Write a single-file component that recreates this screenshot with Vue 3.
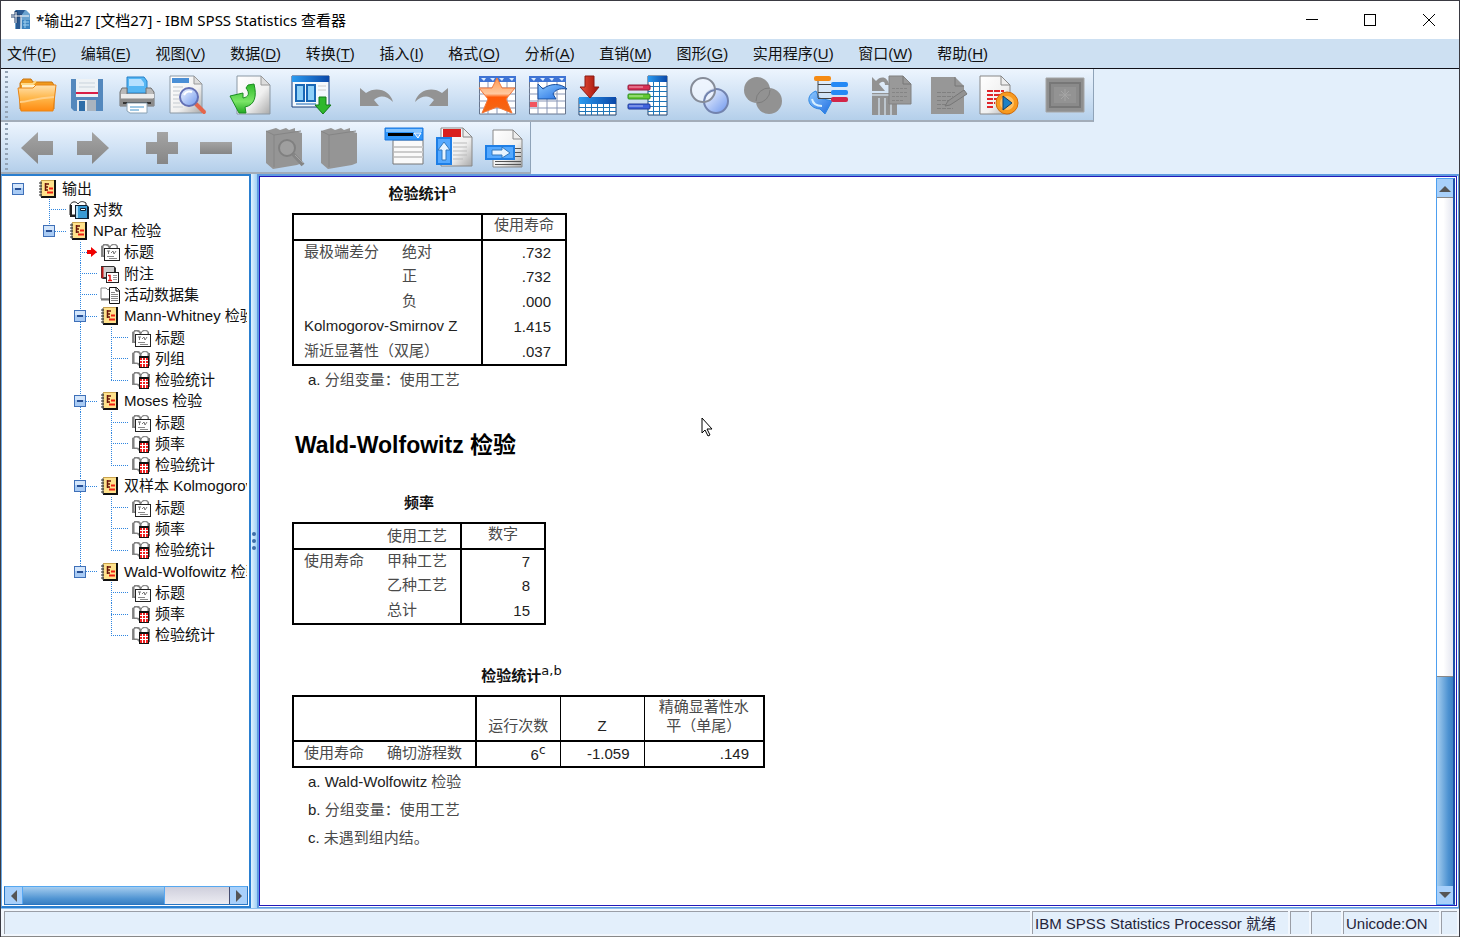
<script setup>
const menus = [
  ['文件', 'F'], ['编辑', 'E'], ['视图', 'V'], ['数据', 'D'], ['转换', 'T'],
  ['插入', 'I'], ['格式', 'O'], ['分析', 'A'], ['直销', 'M'], ['图形', 'G'],
  ['实用程序', 'U'], ['窗口', 'W'], ['帮助', 'H'],
]

// guides: one entry per indent column (blank, line through, tee, elbow)
const group = (label, end, items) => [
  { label, icon: 'out', toggle: true, guides: ['', '', end ? 'elbow' : 'tee'] },
  ...items.map((name, i) => ({
    label: name,
    icon: i === 0 ? 'title' : 'grid',
    guides: ['', '', end ? '' : 'line', i === items.length - 1 ? 'elbow' : 'tee'],
  })),
]

const rows = [
  { label: '输出', icon: 'out', toggle: true, guides: [''] },
  { label: '对数', icon: 'log', guides: ['', 'tee'] },
  { label: 'NPar 检验', icon: 'out', toggle: true, guides: ['', 'elbow'] },
  { label: '标题', icon: 'title', current: true, guides: ['', '', 'tee'] },
  { label: '附注', icon: 'note', guides: ['', '', 'tee'] },
  { label: '活动数据集', icon: 'data', guides: ['', '', 'tee'] },
  ...group('Mann-Whitney 检验', false, ['标题', '列组', '检验统计']),
  ...group('Moses 检验', false, ['标题', '频率', '检验统计']),
  ...group('双样本 Kolmogorov-Smirnov 检验', false, ['标题', '频率', '检验统计']),
  ...group('Wald-Wolfowitz 检验', true, ['标题', '频率', '检验统计']),
]
</script>

<template>
  <div class="window">
    <svg class="defs" aria-hidden="true">
      <defs>
        <linearGradient id="g-orange" x1="0" y1="0" x2="0" y2="1"><stop offset="0" stop-color="#ffe2b0" /><stop offset=".5" stop-color="#ffb74a" /><stop offset="1" stop-color="#ff8a10" /></linearGradient>
        <linearGradient id="g-blue" x1="0" y1="0" x2="1" y2="1"><stop offset="0" stop-color="#8cc8ff" /><stop offset="1" stop-color="#1e6be0" /></linearGradient>
        <linearGradient id="g-head" x1="0" y1="0" x2="1" y2="0"><stop offset="0" stop-color="#2a9bf0" /><stop offset="1" stop-color="#0b48a8" /></linearGradient>
        <linearGradient id="g-page" x1="0" y1="0" x2="1" y2="1"><stop offset="0" stop-color="#ffffff" /><stop offset=".6" stop-color="#f0f0f0" /><stop offset="1" stop-color="#a9a9a9" /></linearGradient>
        <linearGradient id="g-green" x1="0" y1="0" x2="0" y2="1"><stop offset="0" stop-color="#2fbb2a" /><stop offset=".6" stop-color="#7be567" /><stop offset="1" stop-color="#22aa22" /></linearGradient>
        <linearGradient id="g-star" x1="0" y1="0" x2="0" y2="1"><stop offset="0" stop-color="#ff9a50" /><stop offset=".45" stop-color="#ffc9a0" /><stop offset=".55" stop-color="#ff5a08" /><stop offset="1" stop-color="#f06a18" /></linearGradient>
        <linearGradient id="g-red" x1="0" y1="0" x2="1" y2="0"><stop offset="0" stop-color="#e8503a" /><stop offset="1" stop-color="#a01008" /></linearGradient>
        <linearGradient id="g-lens" x1="0" y1="0" x2="1" y2="1"><stop offset="0" stop-color="#f8fbff" /><stop offset="1" stop-color="#6d96ee" /></linearGradient>
        <linearGradient id="g-tool" x1="0" y1="0" x2="0" y2="1"><stop offset="0" stop-color="#a4a4a4" /><stop offset="1" stop-color="#868686" /></linearGradient>
      </defs>
      <symbol id="i-out" viewBox="0 0 20 18">
        <rect x="3" y="1" width="14" height="16" fill="#ffe28c" />
        <path d="M3 .5h14" stroke="#c9a24c" /><path d="M17 0v18M3 17h15" stroke="#111" stroke-width="2" />
        <path d="M3 1v16" stroke="#555" /><path d="M1 3h3M1 6h3M1 9h3M1 12h3M1 15h3" stroke="#222" />
        <path d="M7.500 3v8M7 4h4M7 7h3M7 10h3" stroke="#6a1408" fill="none" stroke-width="1.500" />
        <path d="M11 8.500h4M9 12.500h6" stroke="#f02010" stroke-width="2" />
      </symbol>
      <symbol id="i-book" viewBox="0 0 20 18">
        <path d="M1 3l2-1v-1h5l2 2 2-2h4l2 2v12h-8l-2 1-2-2H1z" fill="#8a8a8a" />
        <path d="M3 3c2-2 4-1 6 1v10c-2-1-4-1-6-1zM10 4c2-3 5-3 7-1v10h-7z" fill="#fff" stroke="#777" />
      </symbol>
      <symbol id="i-title" viewBox="0 0 20 18">
        <use href="#i-book" width="20" height="18" />
        <rect x="4.500" y="5.500" width="15" height="12" fill="#fff" stroke="#222" />
        <path d="M7 8h3M8.500 8v3M11 10l2-2 1 3 2-3" stroke="#777" fill="none" /><path d="M7 13.500h7M9 15.500h8" stroke="#888" />
      </symbol>
      <symbol id="i-grid" viewBox="0 0 20 18">
        <use href="#i-book" width="20" height="18" />
        <path d="M17 3h2v13h-2z" fill="#777" />
        <rect x="8" y="6" width="10" height="12" fill="#111" /><rect x="9" y="8" width="8" height="9" fill="#f02020" />
        <path d="M9 10.500h8M9 13.500h8M11.500 8v9M14.500 8v9" stroke="#fff" />
      </symbol>
      <symbol id="i-log" viewBox="0 0 20 18">
        <path d="M1 4c2-4 6-4 8-1 2-3 5-3 8-1v12H1z" fill="#fff" stroke="#222" /><path d="M2 4v11h4" stroke="#222" stroke-width="2" fill="none" />
        <path d="M6 4h12l2 2v12H6z" fill="#123" /><rect x="8" y="5" width="10" height="12" fill="#3a9bd4" /><path d="M8 5v12" stroke="#a9dcf6" stroke-width="2" /><path d="M11.500 7.500h5v2h-5z" fill="#fff" stroke="#123" />
      </symbol>
      <symbol id="i-note" viewBox="0 0 20 18">
        <path d="M1 1h13l2 2v11H3l-2-1z" fill="#333" /><path d="M3 2h11v10H3z" fill="#cfcfcf" /><path d="M2.500 2v11" stroke="#c01818" stroke-width="2" />
        <rect x="6.500" y="7.500" width="12" height="10" fill="#fff" stroke="#222" /><path d="M8 10.500h2v5M8 15.500h4" stroke="#e81818" stroke-width="1.500" fill="none" /><path d="M13 10.500h4M13 12.500h4M13 14.500h4" stroke="#999" />
      </symbol>
      <symbol id="i-data" viewBox="0 0 20 18">
        <path d="M1 2h5l2 2 2-2v11H1z" fill="#fff" stroke="#888" /><path d="M1 13.500h8l2 2" stroke="#777" stroke-width="2" fill="none" />
        <path d="M9.500 1.500h7l3 3v13h-10z" fill="#fff" stroke="#111" /><path d="M16 1v4h4" stroke="#111" fill="none" /><path d="M11 6.500h4M11 8.500h7M11 10.500h7M11 12.500h7M11 14.500h7" stroke="#888" />
      </symbol>
    </svg>

    <header class="titlebar">
      <svg class="app-icon" width="22" height="22" viewBox="0 0 22 22">
        <path d="M5 1h11l4 4v15H5z" fill="#6ba3cf" /><path d="M6 1h9c-1 3-4 4-4 8s0 8-1 11H6z" fill="#2a5a92" />
        <path d="M1 7h11M6 2v12" stroke="#1b3d6c" stroke-width="3" /><path d="M1 7h18M6 3v11M11 6v14" stroke="#fff" />
        <rect x="12" y="11" width="8" height="9" fill="#3b83c0" /><path d="M13 13h6M13 16h6M15 11v8" stroke="#9ed0f0" />
      </svg>
      <h1>*输出27 [文档27] - IBM SPSS Statistics 查看器</h1>
      <button class="caption-btn" aria-label="最小化"><svg width="12" height="12"><path d="M0 5.500h12" stroke="#000" /></svg></button>
      <button class="caption-btn" aria-label="最大化"><svg width="12" height="12"><rect x=".5" y=".5" width="11" height="11" fill="none" stroke="#000" /></svg></button>
      <button class="caption-btn" aria-label="关闭"><svg width="12" height="12"><path d="M0 0l12 12M12 0L0 12" stroke="#000" /></svg></button>
    </header>

    <nav class="menubar">
      <div class="menus">
        <button v-for="[name, key] in menus" :key="key" class="menu">{{ name }}(<u>{{ key }}</u>)</button>
      </div>
    </nav>

    <div class="toolbar">
      <span class="grip"></span>
      <button class="tool" aria-label="打开">
        <svg viewBox="0 0 40 40"><path d="M3 34V8l3-4h8l2 3h19l2 3v24z" fill="#f09a1c" stroke="#c87412" /><path d="M5 10h30v6H5z" fill="#fff3cf" /><path d="M4 9h12l3-3" stroke="#ffd884" stroke-width="2" fill="none" /><path d="M1 13h15l3-3h20l-3 26H4z" fill="url(#g-orange)" stroke="#e98414" /><path d="M3 27c9 0 13-4 34-5" stroke="#ffd08a" stroke-width="2" fill="none" /></svg>
      </button>
      <button class="tool" aria-label="保存">
        <svg viewBox="0 0 40 40"><path d="M4 4h32v32H7l-3-3z" fill="#5488bd" /><path d="M9 4h22v18H9z" fill="#eef2f5" /><path d="M9 17h22v2H9z" fill="#d81f46" /><path d="M12 8h16M12 12h16" stroke="#c9d3dc" /><path d="M10 25h19v11H10z" fill="#e4e9ee" /><path d="M12 26h6v10h-6z" fill="#2e6da8" /><path d="M20 25h9v11h-9z" fill="#aab4bf" /></svg>
      </button>
      <button class="tool" aria-label="打印">
        <svg viewBox="0 0 40 40"><path d="M10 2h17l3 4v12H10z" fill="#56b7f4" stroke="#2480c8" /><path d="M12 4h12l3 4v3H12z" fill="#b5e0ff" /><path d="M5 13h5v6h19v-6h5l3 4v14H3V17z" fill="#b9b9b9" stroke="#707070" /><path d="M4 19h33v4H4z" fill="#ececec" /><path d="M3 24h34v7H3z" fill="#8b8b8b" /><path d="M6 28h28" stroke="#333" stroke-width="2" /><path d="M10 28h20v10H13l-3-2z" fill="#fff" stroke="#8aa2b4" /><path d="M13 32h14M13 35h9" stroke="#3f91ca" /></svg>
      </button>
      <button class="tool" aria-label="打印预览">
        <svg viewBox="0 0 40 40"><path d="M3 1h24l8 8v29H3z" fill="url(#g-page)" stroke="#8b98a4" /><path d="M27 1v8h8z" fill="#ddd" stroke="#999" /><path d="M5 3h17v5H5z" fill="#4a8fd6" /><path d="M6 12h10M6 16h7M6 20h6M6 24h6M6 28h7M6 32h10" stroke="#dcdfe2" stroke-width="2" /><path d="M28 28l9 9" stroke="#e4664c" stroke-width="4" stroke-linecap="round" /><circle cx="22" cy="22" r="9" fill="url(#g-lens)" stroke="#6370b4" stroke-width="2" /><path d="M17 20c2-4 6-4 8-3" stroke="#fff" stroke-width="2" fill="none" /></svg>
      </button>
      <button class="tool m" aria-label="导出">
        <svg viewBox="0 0 40 40"><path d="M8 1h24l9 9v29H8z" fill="url(#g-page)" stroke="#8b98a4" /><path d="M32 1v9h9z" fill="#ddd" stroke="#999" /><path d="M1 21l13-3v5c6-1 7-5 3-10l2-3 6-1c3 12 1 21-9 23l1 6h-7z" fill="url(#g-green)" stroke="#1c8d22" stroke-linejoin="round" /></svg>
      </button>
      <button class="tool m" aria-label="重新调用对话框">
        <svg viewBox="0 0 40 40"><path d="M1 1h37v31H1z" fill="#f4f9fd" stroke="#183f7a" /><path d="M1 1h37v6H1z" fill="url(#g-head)" /><path d="M5 10h8v16H5zM16 10h8v16h-8z" fill="#8ed0f8" stroke="#1867b5" stroke-width="2" /><path d="M27 11h8M27 15h8" stroke="#ccc" /><path d="M5 29h20" stroke="#1867b5" /><path d="M28 22h7v8h5l-8 9-8-9h4z" fill="#2fb82c" stroke="#147a18" /></svg>
      </button>
      <button class="tool m" aria-label="撤消" disabled>
        <svg viewBox="0 0 40 40"><path d="M7 13l6 5c10-7 24-3 27 9-7-7-14-7-19-2l5 6H7z" fill="#939393" /></svg>
      </button>
      <button class="tool s" aria-label="重做" disabled>
        <svg viewBox="0 0 40 40"><path d="M40 13l-6 5C24 11 10 15 7 27c7-7 14-7 19-2l-5 6h19z" fill="#939393" /></svg>
      </button>
      <button class="tool xl" aria-label="转至个案">
        <svg viewBox="0 0 40 40"><path d="M2.500 2h36v37h-36z" fill="#fff" stroke="#67758c" /><path d="M2 1h37v6H2z" fill="#3f74d4" /><path d="M4 3h5l-2 3zM13 3h5l-2 3zM22 3h5l-2 3zM32 3h5l-2 3z" fill="#dcecff" /><path d="M11 7v32M20 7v32M30 7v32M2 13h36M2 19h36M2 26h36M2 33h36" stroke="#8795b5" /><path d="M20 3l5 10h13l-9 11 6 14-15-6-15 6 6-14-9-11h13z" fill="url(#g-star)" stroke="#f1783c" /></svg>
      </button>
      <button class="tool" aria-label="转至变量">
        <svg viewBox="0 0 40 40"><path d="M2.500 2h36v37h-36z" fill="#fff" stroke="#67758c" /><path d="M2 1h37v6H2z" fill="#3f74d4" /><path d="M4 3h5l-2 3zM13 3h5l-2 3zM22 3h5l-2 3zM32 3h5l-2 3z" fill="#dcecff" /><path d="M11 7v32M20 7v32M30 7v32M2 13h36M2 19h36M2 26h36M2 33h36" stroke="#8795b5" /><path d="M3 27h7v5H3z" fill="#f2555f" /><path d="M11 9l5 5c7-6 18-6 24 0-8-1-12 1-14 5l3 5H11z" fill="url(#g-blue)" stroke="#174e9f" /></svg>
      </button>
      <button class="tool" aria-label="插入个案">
        <svg viewBox="0 0 40 40"><path d="M2 23h37v17H2z" fill="#fff" stroke="#24446e" /><path d="M2 22h37v7H2z" fill="url(#g-head)" /><path d="M8.500 29v11M14.500 29v11M20.500 29v11M26.500 29v11M32.500 29v11M2 32.500h37M2 36.500h37" stroke="#1f75b8" /><path d="M8 1h9v11h5l-9 11L3 12h5z" fill="url(#g-red)" stroke="#8a1a14" /></svg>
      </button>
      <button class="tool" aria-label="变量">
        <svg viewBox="0 0 40 40"><path d="M21 1h19v39H21z" fill="#fff" stroke="#24446e" /><path d="M21 1h19v6H21z" fill="url(#g-head)" /><path d="M26.500 7v33M32.500 7v33M21 11.500h19M21 16.500h19M21 21.500h19M21 26.500h19M21 31.500h19M21 36.500h19" stroke="#1f75b8" /><rect x="1" y="10" width="22" height="5" rx="1" fill="#d82f54" stroke="#8f1c3b" /><rect x="1" y="19" width="22" height="5" rx="1" fill="#63c931" stroke="#2d8b20" /><rect x="1" y="29" width="22" height="5" rx="1" fill="#3f62dc" stroke="#213d9b" /><path d="M2 12h14M2 21h14M2 31h14" stroke="#fff" opacity=".6" /></svg>
      </button>
      <button class="tool m" aria-label="使用变量集">
        <svg viewBox="0 0 40 40"><circle cx="27" cy="26" r="12" fill="url(#g-lens)" stroke="#7283ae" stroke-width="2" /><circle cx="14" cy="15" r="12" fill="#f4f8ff" fill-opacity=".7" stroke="#868c98" stroke-width="2" /><path d="M15 26a12 12 0 0 1 11-11" fill="none" stroke="#7283ae" stroke-width="2" /></svg>
      </button>
      <button class="tool s" aria-label="显示所有变量" disabled>
        <svg viewBox="0 0 40 40"><circle cx="13" cy="15" r="13" fill="#929292" /><circle cx="25" cy="26" r="13" fill="#929292" /><path d="M12 26a13 13 0 0 1 14-13M26 15a13 13 0 0 1-13 13" fill="none" stroke="#7d7d7d" /></svg>
      </button>
      <button class="tool l" aria-label="选择最后输出">
        <svg viewBox="0 0 40 40"><path d="M7 16C-4 20-2 33 11 34l5 5 7-13-13-3z" fill="url(#g-blue)" stroke="#2d87e2" /><path d="M3 24c1 5 4 7 10 7" stroke="#d6efff" stroke-width="2" fill="none" /><path d="M9 5v18M9 9.500h15M9 17.500h15M9 23.500h15" stroke="#444" fill="none" /><rect x="5" y="1" width="17" height="5" rx="2" fill="#f58b14" /><rect x="22" y="7" width="17" height="5" rx="2" fill="#2489f5" /><rect x="22" y="15" width="17" height="5" rx="2" fill="#2489f5" /><rect x="22" y="22" width="17" height="5" rx="2" fill="#d22548" /></svg>
      </button>
      <button class="tool m" aria-label="关联自动脚本" disabled>
        <svg viewBox="0 0 40 40"><path d="M1 18h25v22H1z" fill="#929292" /><path d="M1 20h18M8 23v17M14 23v17M20 27v13" stroke="#bcc5cd" stroke-width="2" /><path d="M1 2l4 4C10 0 17 2 18 10h-4c0-4-3-4-6-1l6 7H1z" fill="#929292" /><path d="M18 1h14l8 8v20H18z" fill="#999" stroke="#818181" /><path d="M32 1v8h8" fill="none" stroke="#777" /><path d="M21 13.500h15M21 17.500h15M21 21.500h15M21 25.500h11" stroke="#858585" stroke-dasharray="3 1" /></svg>
      </button>
      <button class="tool s" aria-label="创建脚本" disabled>
        <svg viewBox="0 0 40 40"><path d="M5 2h24l9 9v28H5z" fill="#979797" /><path d="M29 2v9h9" fill="none" stroke="#777" /><path d="M11 17.500h18M11 21.500h16M11 25.500h12M11 29.500h9M11 33.500h16" stroke="#808080" stroke-dasharray="4 1" /><path d="M38 15l3 4-17 11-5 1 3-5z" fill="#929292" stroke="#777" /></svg>
      </button>
      <button class="tool" aria-label="运行脚本">
        <svg viewBox="0 0 40 40"><path d="M4 1h21l9 9v29H4z" fill="url(#g-page)" stroke="#888" /><path d="M25 1v9h9z" fill="#eee" stroke="#888" /><path d="M11 16h17M11 20h15M11 24h10M11 28h8M11 32h7" stroke="#e0252a" stroke-width="2" stroke-dasharray="6 1" /><circle cx="31" cy="28" r="11" fill="#f79a20" stroke="#d06c0c" /><circle cx="31" cy="28" r="7" fill="#ffc062" /><path d="M27 21l9 7-9 7z" fill="#1c80c4" stroke="#123c66" /></svg>
      </button>
      <button class="tool xl" aria-label="指定窗口" disabled>
        <svg viewBox="0 0 40 40"><path d="M1 3h38v34H1z" fill="#8f8f8f" stroke="#a5a5a5" /><path d="M5 8h30v24H5z" fill="#8a8a8a" stroke="#777" stroke-width="2" /><path d="M9 12h22v16H9z" fill="#939393" /><path d="M20 14v12M14 20h12M16 16l8 8M24 16l-8 8" stroke="#a5a5a5" /></svg>
      </button>
    </div>

    <div class="toolbar">
      <span class="grip"></span>
      <button class="tool" aria-label="升级" disabled><svg viewBox="0 0 40 40"><path d="M4 21L21 5v9h15v14H21v9z" fill="url(#g-tool)" /></svg></button>
      <button class="tool s" aria-label="降级" disabled><svg viewBox="0 0 40 40"><path d="M37 21L20 5v9H5v14h15v9z" fill="url(#g-tool)" /></svg></button>
      <button class="tool xl" aria-label="展开" disabled><svg viewBox="0 0 40 40"><path d="M16 5h11v10h10v12H27v10H16V27H5V15h11z" fill="url(#g-tool)" /></svg></button>
      <button class="tool s" aria-label="折叠" disabled><svg viewBox="0 0 40 40"><path d="M4 15h32v12H4z" fill="url(#g-tool)" /></svg></button>
      <button class="tool xl" aria-label="显示" disabled>
        <svg viewBox="0 0 40 40"><path d="M1 4l10-3 4 2 6-2 3 2 6-2v3l7 2v30l-5 2-24 4-7-6z" fill="#959595" /><path d="M1 4l8 4v32M9 8l27-4" fill="none" stroke="#858585" /><circle cx="22" cy="21" r="8" fill="#9f9f9f" stroke="#808080" stroke-width="2" /><path d="M28 27l10 11" stroke="#858585" stroke-width="4" /><path d="M30 28l8 8" stroke="#a4a4a4" /></svg>
      </button>
      <button class="tool s" aria-label="隐藏" disabled>
        <svg viewBox="0 0 40 40"><path d="M1 4l10-3 4 2 6-2 3 2 6-2v3l7 2v30l-5 2-24 4-7-6z" fill="#959595" /><path d="M1 4l8 4v32M9 8l27-4" fill="none" stroke="#858585" /></svg>
      </button>
      <button class="tool l" aria-label="插入标题">
        <svg viewBox="0 0 40 40"><path d="M8 13h30v24H8z" fill="#fafafa" stroke="#777" /><path d="M9 20h29M9 25h29M9 30h29" stroke="#ccc" stroke-width="2" /><path d="M0 1h38v12H0z" fill="#3096fa" stroke="#1b77de" /><path d="M1 2h36v3H1z" fill="#85c4ff" /><path d="M3 7.500h25" stroke="#000" stroke-width="3" /><path d="M29 6h7l-3 5z" fill="#74b8ff" stroke="#fff" /></svg>
      </button>
      <button class="tool" aria-label="插入新标题">
        <svg viewBox="0 0 40 40"><path d="M6 1h22l9 9v29H6z" fill="url(#g-page)" stroke="#888" /><path d="M28 1v9h9z" fill="#eee" stroke="#888" /><path d="M8 2h18v8H8z" fill="#d9201d" /><path d="M18 16h14M18 20h14M18 24h14M18 28h14M18 32h10" stroke="#bbb" /><path d="M2 11h14v26H2z" fill="#55a9ff" stroke="#1f7fe6" stroke-width="2" /><path d="M9 15l6 8h-4v10H7V23H3z" fill="#e8f4ff" stroke="#3579bd" /></svg>
      </button>
      <button class="tool" aria-label="插入文本">
        <svg viewBox="0 0 40 40"><path d="M8 3h20l9 9v28H8z" fill="url(#g-page)" stroke="#888" /><path d="M28 3v9h9z" fill="#eee" stroke="#888" /><path d="M30 21.500h6M30 25.500h6M30 29.500h6M10 34.500h26M10 37.500h26" stroke="#555" /><path d="M1 19h28v13H1z" fill="#55a9ff" stroke="#1f7fe6" stroke-width="2" /><path d="M7 23h10v-3l8 6-8 5v-3H7z" fill="#e8f4ff" stroke="#3579bd" /></svg>
      </button>
    </div>

    <main class="workspace">
      <aside class="outline">
        <ul class="tree">
          <li v-for="(row, i) in rows" :key="i" class="row">
            <span v-for="(g, c) in row.guides" :key="c" class="guide" :class="[g, { end: c === row.guides.length - 1 }]">
              <button v-if="row.toggle && c === row.guides.length - 1" class="toggle" aria-label="折叠">
                <svg width="12" height="12"><rect x=".5" y=".5" width="11" height="11" fill="#a9cbf4" stroke="#3f70b8" /><path d="M1 1h10v4H1z" fill="#d4e6fb" /><path d="M3 6h6" stroke="#274f94" stroke-width="2" /></svg>
              </button>
              <svg v-if="row.current && c === row.guides.length - 1" class="current" width="10" height="10"><path d="M0 3h4V0l6 5-6 5V7H0z" fill="#f00000" /></svg>
            </span>
            <svg class="node" width="20" height="18"><use :href="'#i-' + row.icon" width="20" height="18" /></svg>
            <span class="label">{{ row.label }}</span>
          </li>
        </ul>
        <div class="hscroll">
          <button aria-label="向左滚动"><svg width="8" height="12"><path d="M7 0v12L1 6z" fill="#555" /></svg></button>
          <span class="thumb"></span><span class="track"></span>
          <button aria-label="向右滚动"><svg width="8" height="12"><path d="M1 0v12l6-6z" fill="#555" /></svg></button>
        </div>
      </aside>

      <div class="divider"><i></i><i></i><i></i></div>

      <section class="viewer">
        <article class="document">
          <table class="ks">
            <caption class="noted">检验统计<sup>a</sup></caption>
            <colgroup><col class="w99"><col class="w90"><col class="w84"></colgroup>
            <thead><tr><td colspan="2"></td><th>使用寿命</th></tr></thead>
            <tbody>
              <tr><th>最极端差分</th><th>绝对</th><td>.732</td></tr>
              <tr><th></th><th>正</th><td>.732</td></tr>
              <tr><th></th><th>负</th><td>.000</td></tr>
              <tr><th colspan="2" class="latin">Kolmogorov-Smirnov Z</th><td>1.415</td></tr>
              <tr><th colspan="2">渐近显著性（双尾）</th><td>.037</td></tr>
            </tbody>
          </table>
          <p class="note"><b>a.</b> 分组变量：使用工艺</p>

          <h2>Wald-Wolfowitz 检验</h2>

          <table class="freq">
            <caption>频率</caption>
            <colgroup><col class="w84"><col class="w84"><col class="w84"></colgroup>
            <thead><tr><th></th><th class="low">使用工艺</th><th>数字</th></tr></thead>
            <tbody>
              <tr><th>使用寿命</th><th>甲种工艺</th><td>7</td></tr>
              <tr><th></th><th>乙种工艺</th><td>8</td></tr>
              <tr><th></th><th>总计</th><td>15</td></tr>
            </tbody>
          </table>

          <table class="runs">
            <caption class="noted">检验统计<sup>a,b</sup></caption>
            <colgroup><col class="w84"><col class="w99"><col class="w84"><col class="w84"><col class="w120"></colgroup>
            <thead><tr><td colspan="2"></td><th>运行次数</th><th class="latin">Z</th><th>精确显著性水<br>平（单尾）</th></tr></thead>
            <tbody>
              <tr><th>使用寿命</th><th>确切游程数</th><td>6<sup>c</sup></td><td>-1.059</td><td>.149</td></tr>
            </tbody>
          </table>
          <p class="note"><b>a. Wald-Wolfowitz</b> 检验</p>
          <p class="note"><b>b.</b> 分组变量：使用工艺</p>
          <p class="note"><b>c.</b> 未遇到组内结。</p>
        </article>
        <div class="vscroll">
          <button aria-label="向上滚动"><svg width="12" height="7"><path d="M0 7h12L6 1z" fill="#555" /></svg></button>
          <span class="track"></span><span class="thumb"></span>
          <button aria-label="向下滚动"><svg width="12" height="7"><path d="M0 0h12L6 6z" fill="#555" /></svg></button>
        </div>
        <svg class="pointer" width="13" height="20" viewBox="0 0 13 20"><path d="M1 1v15l3-3 3 6 2-1-3-6h5z" fill="#fff" stroke="#000" /></svg>
      </section>
    </main>

    <footer class="status">
      <span class="cell grow"></span>
      <span class="cell proc">IBM SPSS Statistics Processor 就绪</span>
      <span class="cell small"></span>
      <span class="cell mid"></span>
      <span class="cell uni">Unicode:ON</span>
      <span class="cell last"></span>
    </footer>
  </div>
</template>

<style>
body { margin: 0; overflow: hidden; }
</style>

<style scoped>
* { box-sizing: border-box; }
button { border: 0; padding: 0; margin: 0; background: none; font: inherit; color: inherit; }
svg { display: block; }
.window {
  display: flex; flex-direction: column; height: 100vh; background: #e3effb;
  border: 1px solid #3a3a42; border-bottom: 0; overflow: hidden;
  font: 15px/20px "Liberation Sans", "Noto Sans CJK SC", sans-serif; color: #111;
}
.defs { position: absolute; width: 0; height: 0; }

.titlebar { display: flex; align-items: center; flex: none; height: 38px; background: #fff; padding-left: 9px; }
.titlebar h1 { flex: 1; margin: 0 0 0 4px; font: 15px/20px "Noto Sans", "Noto Sans CJK SC", sans-serif; color: #000; white-space: nowrap; }
.caption-btn { display: flex; align-items: center; justify-content: center; width: 58px; height: 38px; }
.caption-btn:last-child { width: 60px; }

.menubar { flex: none; height: 30px; background: #cde0f2; border-bottom: 1px solid #101018; }
.menus { display: flex; justify-content: space-between; max-width: 981px; height: 29px; margin-left: 6px; }
.menu { white-space: nowrap; }
.menu u { text-underline-offset: 2px; }

.toolbar {
  display: flex; align-items: center; align-self: flex-start; flex: none; height: 53px; padding-right: 3px;
  background: linear-gradient(#edf5fe, #d2e3f5 50%, #b4cfea);
  border-right: 1px solid #8fa3b8; border-bottom: 2px solid #a3adb9;
}
.toolbar + .toolbar { height: 52px; padding-right: 0; }
.grip { flex: none; width: 3px; height: 48px; margin: 0 4px; background: repeating-linear-gradient(#93a3b5 0 2px, transparent 2px 5px); }
.tool { display: flex; justify-content: center; align-items: center; flex: none; width: 50px; height: 50px; }
.tool svg { width: 40px; height: 40px; overflow: visible; }
.tool.s { margin-left: 5px; }
.tool.m { margin-left: 12px; }
.tool.l { margin-left: 15px; }
.tool.xl { margin-left: 19px; }

.workspace { display: flex; flex: 1; min-height: 0; }
.outline { display: flex; flex-direction: column; flex: none; width: 250px; border: 2px solid #2a7fd0; border-left: 1px solid #6aa9e6; background: #fff; }
.tree { flex: none; display: grid; grid-auto-rows: 1fr; height: 468px; margin: 2px 2px 0 1px; padding: 0; list-style: none; overflow: hidden; }
.row { display: flex; align-items: center; min-width: 0; white-space: nowrap; }
.guide {
  position: relative; display: flex; align-items: center; align-self: stretch; flex: none; width: 31px; padding-left: 9px;
  --dots-v: repeating-linear-gradient(#2f86e0 0 1px, transparent 1px 2px);
  --dots-h: repeating-linear-gradient(90deg, #2f86e0 0 1px, transparent 1px 2px);
  background-repeat: no-repeat;
}
.guide.end { width: 35px; }
.guide.line { background-image: var(--dots-v); background-position: 15px 0; background-size: 1px 100%; }
.guide.tee { background-image: var(--dots-v), var(--dots-h); background-position: 15px 0, 15px 50%; background-size: 1px 100%, 18px 1px; }
.guide.elbow { background-image: var(--dots-v), var(--dots-h); background-position: 15px 0, 15px 50%; background-size: 1px 50%, 18px 1px; }
.current { position: absolute; left: 22px; }
.node { flex: none; }
.label { margin-left: 4px; }
.hscroll { display: flex; height: 19px; margin: auto 1px 1px 2px; border: 1px solid #2876c4; border-top-color: #56a8f0; }
.hscroll button { display: flex; align-items: center; justify-content: center; width: 17px; background: #a8d0fa; }
.hscroll .thumb { flex: 142; background: linear-gradient(#a5cdef, #4e93d2 70%, #3a7fc2); border: 1px solid #58a8f2; border-width: 0 1px; }
.hscroll .track { flex: 65; background: linear-gradient(#cfcfdc, #ececf2); border-right: 1px solid #444c70; }

.divider { display: flex; flex-direction: column; justify-content: center; align-items: center; gap: 3px; flex: none; width: 6px; background: linear-gradient(90deg, #e3f3ff, #9fd0f6); }
.divider i { width: 4px; height: 4px; border-radius: 50%; background: #3e6da8; }

.viewer { position: relative; display: flex; flex: 1; min-width: 0; border: 2px solid #5f9be0; border-width: 2px 1px 1px 2px; outline: 1px solid #2418b8; outline-offset: -3px; background: #fff; padding: 2px 3px 2px 1px; }
.document { flex: 1; min-width: 0; padding: 5px 0 0 32px; color: #222; }
.vscroll { display: flex; flex-direction: column; flex: none; width: 19px; border: 1px solid #4d9ff0; border-right: 2px solid #1c4fa8; }
.vscroll button { display: flex; align-items: center; justify-content: center; height: 18px; background: #a8d0fa; }
.vscroll .track { flex: 481; background: linear-gradient(90deg, #fff 40%, #e4e6f0); border-top: 1px solid #888; border-bottom: 1px solid #888; }
.vscroll .thumb { flex: 210; background: linear-gradient(90deg, #a5cdef, #4e93d2 70%, #3a7fc2); }
.pointer { position: absolute; left: 442px; top: 241px; }

table { table-layout: fixed; border-collapse: collapse; border: 2px solid #000; line-height: 19px; }
.ks { width: 275px; }
.freq { width: 254px; margin-top: 32px; }
.runs { width: 473px; margin-top: 40px; }
caption { padding-bottom: 8px; font-size: 15px; font-weight: 700; line-height: 22px; color: #111; white-space: nowrap; }
.noted { padding-right: 14px; }
sup { font: 13px/12px "DejaVu Sans", sans-serif; vertical-align: 6px; }
.w84 { width: 84px; } .w90 { width: 90px; } .w99 { width: 99px; } .w120 { width: 120px; }
tr { height: 25px; }
th { padding: 0; font-weight: 400; color: #4a4a4a; text-align: center; white-space: nowrap; vertical-align: top; }
thead td, thead th { border-bottom: 2px solid #000; }
thead tr { height: 26px; }
tbody th { padding: 1px 0 0 10px; text-align: left; }
tbody td { padding: 2px 14px 0 0; text-align: right; color: #222; vertical-align: top; border-left: 2px solid #000; }
tbody sup { font-size: 12px; }
thead th:last-child { border-left: 2px solid #000; }
th.latin { color: #222; }
.low { padding: 2px 0 0 10px; text-align: left; }
.runs thead tr { height: 44px; }
.runs thead th { vertical-align: bottom; padding-bottom: 5px; border-left: 1px solid #000; }
.runs tbody td { border-left: 1px solid #000; }
.runs thead th:nth-child(2), .runs tbody td:nth-child(3) { border-left: 2px solid #000; }
.runs tbody tr { height: 26px; }
.note { margin: 0 0 0 16px; line-height: 28px; color: #4a4a4a; }
.note b { font-weight: 400; color: #222; }
h2 { margin: 36px 0 0 3px; font-size: 23px; line-height: 30px; font-weight: 700; color: #000; }

.status { display: flex; flex: none; height: 29px; padding: 2px 2px 2px 3px; gap: 2px; border-top: 1px solid #8fc0ee; border-bottom: 1px solid #888; background: #f2f7fd; }
.cell { flex: none; border: 1px solid #9a9ea6; border-width: 1px 0 0 1px; background: #e3effb; padding-left: 2px; line-height: 24px; color: #25253a; white-space: nowrap; overflow: hidden; }
.grow { flex: 1; }
.proc { width: 256px; }
.small { width: 19px; }
.mid { width: 30px; }
.uni { width: 96px; }
.last { width: 16px; }
</style>
